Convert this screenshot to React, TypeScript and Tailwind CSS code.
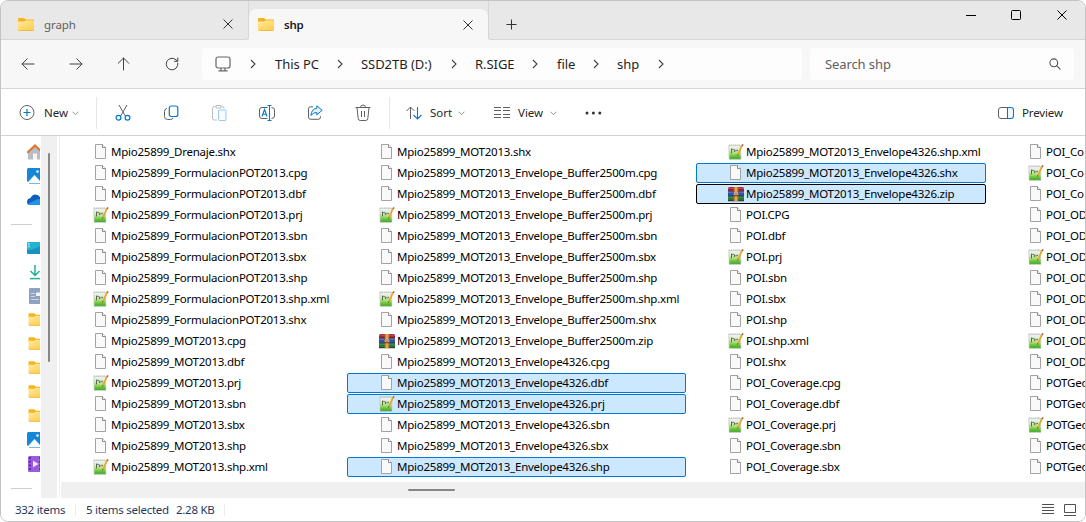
import React from "react";

type Kind = "page" | "script" | "zip";
type Sel = "" | "blue" | "black";
type FileItem = [string, Kind?, Sel?];

const col1: FileItem[] = [
  ["Mpio25899_Drenaje.shx"],
  ["Mpio25899_FormulacionPOT2013.cpg"],
  ["Mpio25899_FormulacionPOT2013.dbf"],
  ["Mpio25899_FormulacionPOT2013.prj", "script"],
  ["Mpio25899_FormulacionPOT2013.sbn"],
  ["Mpio25899_FormulacionPOT2013.sbx"],
  ["Mpio25899_FormulacionPOT2013.shp"],
  ["Mpio25899_FormulacionPOT2013.shp.xml", "script"],
  ["Mpio25899_FormulacionPOT2013.shx"],
  ["Mpio25899_MOT2013.cpg"],
  ["Mpio25899_MOT2013.dbf"],
  ["Mpio25899_MOT2013.prj", "script"],
  ["Mpio25899_MOT2013.sbn"],
  ["Mpio25899_MOT2013.sbx"],
  ["Mpio25899_MOT2013.shp"],
  ["Mpio25899_MOT2013.shp.xml", "script"],
];
const col2: FileItem[] = [
  ["Mpio25899_MOT2013.shx"],
  ["Mpio25899_MOT2013_Envelope_Buffer2500m.cpg"],
  ["Mpio25899_MOT2013_Envelope_Buffer2500m.dbf"],
  ["Mpio25899_MOT2013_Envelope_Buffer2500m.prj", "script"],
  ["Mpio25899_MOT2013_Envelope_Buffer2500m.sbn"],
  ["Mpio25899_MOT2013_Envelope_Buffer2500m.sbx"],
  ["Mpio25899_MOT2013_Envelope_Buffer2500m.shp"],
  ["Mpio25899_MOT2013_Envelope_Buffer2500m.shp.xml", "script"],
  ["Mpio25899_MOT2013_Envelope_Buffer2500m.shx"],
  ["Mpio25899_MOT2013_Envelope_Buffer2500m.zip", "zip"],
  ["Mpio25899_MOT2013_Envelope4326.cpg"],
  ["Mpio25899_MOT2013_Envelope4326.dbf", "page", "blue"],
  ["Mpio25899_MOT2013_Envelope4326.prj", "script", "blue"],
  ["Mpio25899_MOT2013_Envelope4326.sbn"],
  ["Mpio25899_MOT2013_Envelope4326.sbx"],
  ["Mpio25899_MOT2013_Envelope4326.shp", "page", "blue"],
];
const col3: FileItem[] = [
  ["Mpio25899_MOT2013_Envelope4326.shp.xml", "script"],
  ["Mpio25899_MOT2013_Envelope4326.shx", "page", "blue"],
  ["Mpio25899_MOT2013_Envelope4326.zip", "zip", "black"],
  ["POI.CPG"],
  ["POI.dbf"],
  ["POI.prj", "script"],
  ["POI.sbn"],
  ["POI.sbx"],
  ["POI.shp"],
  ["POI.shp.xml", "script"],
  ["POI.shx"],
  ["POI_Coverage.cpg"],
  ["POI_Coverage.dbf"],
  ["POI_Coverage.prj", "script"],
  ["POI_Coverage.sbn"],
  ["POI_Coverage.sbx"],
];
const col4: FileItem[] = [
  ["POI_Co"],
  ["POI_Co", "script"],
  ["POI_Co"],
  ["POI_OD"],
  ["POI_OD"],
  ["POI_OD", "script"],
  ["POI_OD"],
  ["POI_OD"],
  ["POI_OD"],
  ["POI_OD", "script"],
  ["POI_OD"],
  ["POTGeo"],
  ["POTGeo"],
  ["POTGeo", "script"],
  ["POTGeo"],
  ["POTGeo"],
];

function PageIcon() {
  return (
    <svg className="h-4 w-4 shrink-0" viewBox="0 0 16 16">
      <path d="M2.5 .5H9.5L12.5 3.5V14.5H2.5Z" fill="#f9f9f9" stroke="#a3a3a3" />
      <path d="M9.5 .5V3.5H12.5" fill="#fff" stroke="#8a8a8a" />
    </svg>
  );
}

function ScriptIcon() {
  return (
    <svg className="h-4 w-4 shrink-0" viewBox="0 0 16 16">
      <defs>
        <linearGradient id="np" x1="0" y1="0" x2="0" y2="1">
          <stop offset="0" stopColor="#f2f4f2" />
          <stop offset=".35" stopColor="#dcebd0" />
          <stop offset=".6" stopColor="#a5dc6c" />
          <stop offset=".8" stopColor="#62c136" />
          <stop offset="1" stopColor="#3fa32c" />
        </linearGradient>
      </defs>
      <path d="M.8 1.3H12.5L12.9 15.3H1.2Z" fill="url(#np)" stroke="#b3bcb3" strokeWidth=".6" />
      <path d="M.8 1H12.5" stroke="#b6bcc0" strokeWidth="1" strokeDasharray="1 1" />
      <path d="M3.5 4.6V9.4M4.2 5.4H5.8M6.4 5.6V8M8 5.8V7.4M9.4 5.8V7" stroke="#56684f" strokeWidth="1" />
      <path d="M14.3 1.2L9.9 10.4" stroke="#e8a62c" strokeWidth="1.7" />
      <path d="M15 .3L14.2 1.9" stroke="#a56a35" strokeWidth="1.6" />
      <path d="M10 10.2L9.4 11.6" stroke="#6b5a30" strokeWidth="1" />
    </svg>
  );
}

function ZipIcon() {
  return (
    <svg className="h-4 w-4 shrink-0" viewBox="0 0 16 16">
      <path d="M0 2.5L1 1H15L16 2.5V5H0Z" fill="#a3273a" />
      <path d="M0 2.2H16" stroke="#cf5060" strokeWidth=".9" />
      <path d="M0 5.5H16V10H0Z" fill="#3150a6" />
      <path d="M0 6.2H16" stroke="#6286d8" strokeWidth=".9" />
      <path d="M0 10.3H16V15H0Z" fill="#20783a" />
      <path d="M0 11H16" stroke="#4fae59" strokeWidth=".9" />
      <path d="M0 5.2H16M0 10.1H16M0 14.8H16" stroke="#2c2034" strokeWidth=".8" />
      <path d="M5.7 1H10.3V15H5.7Z" fill="#c9772c" />
      <path d="M7.3 1H8.7V15H7.3Z" fill="#f1c044" />
      <rect x="5" y="5.8" width="6" height="4.4" rx="1" fill="#6e4330" />
      <path d="M6.2 9V7.5A1.8 1.5 0 0 1 9.8 7.5V9M8 7V9.3" stroke="#f0eadf" strokeWidth=".9" fill="none" />
    </svg>
  );
}

function FileColumn({ items, width }: { items: FileItem[]; width: string }) {
  return (
    <div className={`flex shrink-0 flex-col gap-px ${width}`}>
      {items.map(([name, kind = "page", sel = ""], i) => (
        <div
          key={i}
          className={`flex h-5 items-center gap-0.5 rounded-[2px] border pl-[31px] ${
            sel === "blue"
              ? "border-[#0078d4] bg-[#cce8ff]"
              : sel === "black"
                ? "border-black bg-[#cce8ff]"
                : "border-transparent"
          }`}
        >
          {kind === "page" ? <PageIcon /> : kind === "script" ? <ScriptIcon /> : <ZipIcon />}
          <span className="text-[11.5px] leading-[18px] tracking-[-0.24px] whitespace-nowrap text-black">{name}</span>
        </div>
      ))}
    </div>
  );
}

function Folder({ className = "" }: { className?: string }) {
  return (
    <svg className={`h-4 w-4 shrink-0 ${className}`} viewBox="0 0 16 16">
      <defs>
        <linearGradient id="fo" x1="0" y1="0" x2=".7" y2="1">
          <stop offset="0" stopColor="#ffe9a6" />
          <stop offset="1" stopColor="#ffcf4d" />
        </linearGradient>
      </defs>
      <path d="M0 2.2Q0 1 1.2 1H6L8 2.6H14.8Q16 2.6 16 3.8V6H0Z" fill="#f7b41c" />
      <path d="M0 5.2Q0 4.6 1 4.6H6L8 3.5H15Q16 3.5 16 4.4V12.8Q16 13.9 14.9 13.9H1.1Q0 13.9 0 12.8Z" fill="url(#fo)" />
      <path d="M.7 13.5H15.3" stroke="#eeb035" strokeWidth=".7" />
    </svg>
  );
}

function Cross({ color = "#333" }: { color?: string }) {
  return (
    <svg className="h-[10px] w-[10px] shrink-0" viewBox="0 0 10 10">
      <path d="M.5 .5L9.5 9.5M9.5 .5L.5 9.5" stroke={color} strokeWidth="1" />
    </svg>
  );
}

function Arrow({ d }: { d: string }) {
  return (
    <svg className="h-4 w-4 shrink-0" viewBox="0 0 16 16" fill="none" stroke="#404040" strokeLinecap="round" strokeLinejoin="round">
      <path d={d} />
    </svg>
  );
}

function Crumb({ label, width, gap = "mr-[18px]" }: { label: string; width: string; gap?: string }) {
  return (
    <div className={`flex shrink-0 items-center ${width}`}>
      <svg className={`h-[10px] w-[6px] shrink-0 ${gap}`} viewBox="0 0 6 10" fill="none" stroke="#444" strokeWidth="1.1">
        <path d="M1 1L5 5L1 9" />
      </svg>
      <span className="text-[13px] leading-5 tracking-[-0.05px] whitespace-nowrap text-[#1f1f1f]">{label}</span>
    </div>
  );
}

function Down() {
  return (
    <svg className="h-[5px] w-[7px] shrink-0" viewBox="0 0 7 5" fill="none" stroke="#909090">
      <path d="M.5 .7L3.5 3.7L6.5 .7" />
    </svg>
  );
}

const label = "text-[11.5px] leading-4 whitespace-nowrap text-[#262626]";
const tool = "h-[18px] w-[18px] shrink-0";

function Toolbar() {
  return (
    <div className="flex h-[47px] shrink-0 items-center border-b border-[#d2d2d2] bg-white pt-[2px] pr-[22px] pl-[17px]">
      <svg className={tool} viewBox="0 0 18 18" fill="none" stroke="#606060">
        <circle cx="9" cy="8.5" r="7" />
        <path d="M9 5V12M5.5 8.5H12.5" stroke="#0078d4" strokeWidth="1.2" />
      </svg>
      <span className={`${label} ml-2 w-[28px]`}>New</span>
      <Down />
      <div className="ml-[17px] h-8 w-px bg-[#e6e6e6]" />
      <svg className={`${tool} ml-[17px]`} viewBox="0 0 18 18" fill="none">
        <path d="M5 1L11.3 12M13 1L6.7 12" stroke="#606060" />
        <circle cx="4.5" cy="13.7" r="2.4" stroke="#0078d4" strokeWidth="1.2" />
        <circle cx="13.5" cy="13.7" r="2.4" stroke="#0078d4" strokeWidth="1.2" />
      </svg>
      <svg className={`${tool} ml-[30px]`} viewBox="0 0 18 18" fill="none">
        <path d="M5 4.5H4.5Q2.5 5 2.5 7.5V12.5Q2.5 15.5 5.5 15.5H8.5Q10.5 15.5 11 14" stroke="#606060" />
        <rect x="7.3" y="2" width="8.5" height="10.5" rx="2" stroke="#0078d4" strokeWidth="1.2" />
      </svg>
      <svg className={`${tool} ml-[30px]`} viewBox="0 0 18 18" fill="none">
        <path d="M5.5 2.5H4.5Q2.5 2.5 2.5 4.5V14Q2.5 16 4.5 16H7M11.5 2.5H12.5Q14 2.5 14 4.5M6 1.5H11V4H6Z" stroke="#bdbdbd" />
        <rect x="8.5" y="6" width="7.5" height="10.5" rx="1" stroke="#99c9ee" fill="#f6fbff" />
      </svg>
      <svg className={`${tool} ml-[30px]`} viewBox="0 0 18 18" fill="none">
        <path d="M9.5 3.5H4Q1.5 3.5 1.5 6V12Q1.5 14.5 4 14.5H9.5M13.5 3.5Q16.5 3.5 16.5 6V12Q16.5 14.5 13.5 14.5" stroke="#606060" />
        <path d="M11.5 2V16M9.5 1.5H13.5M9.5 16.5H13.5M4 12.5L6.5 5.5L9 12.5M4.8 10.2H8.2" stroke="#0078d4" strokeWidth="1.1" />
      </svg>
      <svg className={`${tool} ml-[30px]`} viewBox="0 0 18 18" fill="none">
        <path d="M7 2.8H4.5Q2.5 2.8 2.5 4.8V13Q2.5 15.3 4.8 15.3H12.2Q14.5 15.3 14.5 13V12.3" stroke="#606060" />
        <path d="M10.8 1.8L16.2 6.3L10.8 10.8V8.5Q7.5 8.3 4.8 11.5Q5.5 4.8 10.8 4.3Z" stroke="#0078d4" strokeLinejoin="round" fill="#e5f2fc" />
      </svg>
      <svg className={`${tool} ml-[30px]`} viewBox="0 0 18 18" fill="none" stroke="#606060">
        <path d="M1.5 3.5H16.5M6.5 3.5Q6.5 1 9 1Q11.5 1 11.5 3.5M3 3.5L4.2 14.5Q4.4 16.5 6.2 16.5H11.8Q13.6 16.5 13.8 14.5L15 3.5M7.5 7V13M10.5 7V13" />
      </svg>
      <div className="ml-[17px] h-8 w-px bg-[#e6e6e6]" />
      <svg className={`${tool} ml-[15px]`} viewBox="0 0 18 18" fill="none">
        <path d="M5.5 15V3M1.5 7L5.5 3L9.5 7" stroke="#606060" />
        <path d="M12.5 3V15M8.5 11L12.5 15L16.5 11" stroke="#0078d4" strokeWidth="1.1" />
      </svg>
      <span className={`${label} ml-[7px] w-[28px]`}>Sort</span>
      <Down />
      <svg className="ml-[29px] h-[14px] w-[17px] shrink-0" viewBox="0 0 17 14" stroke="#606060">
        <path d="M0 1.5H7M0 4.5H7M0 8.5H7M0 11.5H7M9 1.5H16M9 4.5H16M9 8.5H16M9 11.5H16" />
      </svg>
      <span className={`${label} ml-[7px] w-[32px]`}>View</span>
      <Down />
      <svg className="ml-[28px] h-1 w-[17px] shrink-0" viewBox="0 0 17 4" fill="#333">
        <circle cx="2" cy="2" r="1.5" />
        <circle cx="8.4" cy="2" r="1.5" />
        <circle cx="14.8" cy="2" r="1.5" />
      </svg>
      <div className="ml-auto flex items-center gap-2">
        <svg className="h-[14px] w-4" viewBox="0 0 16 14" fill="none">
          <path d="M9.5 1.5H3Q.5 1.5 .5 4V10Q.5 12.5 3 12.5H9.5" stroke="#606060" />
          <path d="M9.5 1.5H13Q15.5 1.5 15.5 4V10Q15.5 12.5 13 12.5H9.5Z" stroke="#0078d4" fill="#f3faff" strokeWidth="1.1" />
        </svg>
        <span className={`${label} w-[41px] tracking-[-0.15px]`}>Preview</span>
      </div>
    </div>
  );
}

function SideIcon({ children }: { children: React.ReactNode }) {
  return (
    <div className="flex h-6 shrink-0 items-center pl-[26px]">
      <svg className="h-4 w-4 shrink-0" viewBox="0 0 16 16" fill="none">
        {children}
      </svg>
    </div>
  );
}

function Picture() {
  return (
    <SideIcon>
      <rect x="0" y="0" width="16" height="14" rx="1.5" fill="#1587d6" />
      <path d="M1 14L7.5 7L14 14Z" fill="#fff" />
      <circle cx="10.5" cy="3.6" r="1.3" fill="#dff3ff" />
      <path d="M2 15.5H14" stroke="#72b9ea" />
    </SideIcon>
  );
}

function Side() {
  return (
    <div className="flex w-10 shrink-0 flex-col overflow-hidden border-r border-white bg-white pt-1">
      <SideIcon>
        <path d="M1 8V15.5H6V10H10V15.5H15V8L8 2Z" fill="#b9bcc0" />
        <path d="M6 15.5V9.5H10V15.5Z" fill="#f7f7f7" />
        <path d="M.8 8.2L8 1.4L15.2 8.2" stroke="#e0752a" strokeWidth="2" strokeLinecap="round" />
      </SideIcon>
      <Picture />
      <SideIcon>
        <path d="M0 10Q0 6.5 3.5 6Q5 2.5 8.5 2.5Q12 2.5 13.5 6Q16 7 16 10Q16 13 13 13H3Q0 13 0 10Z" fill="#0f5fbd" />
        <path d="M1 11.8L10 7.2Q16 6.5 16 10.5Q16 13 13 13H3Q1.5 13 1 11.8Z" fill="#1f93e8" />
      </SideIcon>
      <div className="flex h-6 shrink-0 items-center pl-[10px]"><div className="h-px w-[21px] bg-[#cfcfcf]" /></div>
      <SideIcon>
        <rect x="0" y="2" width="16" height="12" rx="1" fill="#22b3d3" />
        <path d="M0 10Q8 10 16 4V14H1Q0 14 0 13Z" fill="#1683bd" opacity=".7" />
        <path d="M1.2 4H2.6M1.2 6.5H2.6" stroke="#d9faff" strokeWidth="1.3" />
      </SideIcon>
      <SideIcon>
        <path d="M8 1V11.5M3.5 7L8 11.5L12.5 7" stroke="#23b193" strokeWidth="1.5" />
        <path d="M3 14.6H13" stroke="#23b193" strokeWidth="1.5" />
      </SideIcon>
      <SideIcon>
        <rect x="2" y="0" width="13" height="16" rx="1" fill="#8ea3bf" />
        <path d="M4 5.5H8M4 8.5H8M4 11.5H12" stroke="#c9d5e5" />
        <rect x="9" y="4.5" width="4" height="3.5" fill="#eff4fa" />
      </SideIcon>
      {[0, 1, 2, 3, 4].map((i) => (
        <div key={i} className="flex h-6 shrink-0 items-center pl-[27px]"><Folder className="scale-[.96]" /></div>
      ))}
      <Picture />
      <SideIcon>
        <rect x="1" y="0" width="16" height="16" rx="1.5" fill="#9a5be0" />
        <path d="M3 1V15" stroke="#4b2590" strokeWidth="1.6" strokeDasharray="2 1.7" />
        <path d="M13 1V15" stroke="#4b2590" strokeWidth="1.4" strokeDasharray="2 1.7" />
        <path d="M6 4.7L11.5 8L6 11.3Z" fill="#f4ebff" />
      </SideIcon>
      <div className="flex h-6 shrink-0 items-center pl-[10px]"><div className="h-px w-[21px] bg-[#cfcfcf]" /></div>
    </div>
  );
}

export default function App() {
  return (
    <div className="h-[522px] w-[1086px] overflow-hidden bg-white font-['Noto_Sans','Open_Sans',sans-serif]">
      <div className="flex h-full w-full flex-col overflow-hidden rounded-[8px] border border-[#c3c3c3] bg-white">
        <div className="flex h-[39px] shrink-0 items-stretch bg-[#e8e8e8]">
          <div className="flex w-[248px] items-center rounded-br-[4px] border-r border-b border-[#d6d6d6] pr-[15px] pb-[1px] pl-[17px]">
            <Folder className="mt-[10px]" />
            <span className="mt-[10px] ml-[10px] text-[11.5px] leading-4 tracking-[-0.1px] text-[#606060]">graph</span>
            <div className="mt-[9px] ml-auto"><Cross /></div>
          </div>
          <div className="mt-2 flex w-[239px] items-center rounded-t-[8px] bg-[#f7f7f7] pr-[15px] pl-[9px]">
            <Folder className="mt-px" />
            <span className="mt-px ml-[10px] text-[11.5px] leading-4 font-semibold tracking-[-0.2px] text-[#1a1a1a]">shp</span>
            <div className="ml-auto"><Cross /></div>
          </div>
          <div className="flex flex-1 items-start rounded-bl-[4px] border-b border-l border-[#d6d6d6] pr-[18px] pl-[17px]">
            <svg className="mt-[18px] h-[11px] w-[11px]" viewBox="0 0 11 11" stroke="#333">
              <path d="M5.5 .5V10.5M.5 5.5H10.5" />
            </svg>
            <div className="mt-[9px] ml-auto flex items-center">
              <svg className="h-[10px] w-[10px]" viewBox="0 0 10 10" stroke="#000"><path d="M0 5.5H10" /></svg>
              <svg className="ml-[35px] h-[10px] w-[10px]" viewBox="0 0 10 10" fill="none" stroke="#000"><rect x=".5" y=".5" width="9" height="9" rx="1" /></svg>
              <div className="ml-[36px]"><Cross color="#000" /></div>
            </div>
          </div>
        </div>

        <div className="flex h-[49px] shrink-0 items-center border-b border-[#d6d6d6] bg-[#f7f7f7] pr-[10px] pl-[19px]">
          <Arrow d="M14 8H2M7.3 2.7L2 8L7.3 13.3" />
          <div className="w-8" />
          <Arrow d="M2 8H14M8.7 2.7L14 8L8.7 13.3" />
          <div className="w-8" />
          <Arrow d="M7.5 14V2M2.2 7.3L7.5 2L12.8 7.3" />
          <div className="w-8" />
          <Arrow d="M13.8 7.2A5.8 5.8 0 1 1 12 3.8L13.5 5.2M13.8 2V5.3H10.5" />
          <div className="ml-[22px] flex h-8 w-[600px] items-center rounded-[4px] bg-[#fdfdfd] pl-[13px]">
            <svg className="mr-[19px] h-4 w-4 shrink-0" viewBox="0 0 16 16" fill="none" stroke="#666" strokeWidth="1.2">
              <rect x="1" y="1" width="14" height="11" rx="2" />
              <path d="M6 12V14.5M10 12V14.5M3.5 14.8H12.5" />
            </svg>
            <Crumb label="This PC" width="w-[87px]" gap="mr-[19px]" />
            <Crumb label="SSD2TB (D:)" width="w-[114px]" />
            <Crumb label="R.SIGE" width="w-[81px]" />
            <Crumb label="file" width="w-[61px]" gap="mr-[19px]" />
            <Crumb label="shp" width="w-[65px]" />
            <Crumb label="" width="w-[10px]" />
          </div>
          <div className="ml-2 flex h-8 w-[264px] items-center rounded-[4px] bg-[#fdfdfd] pr-[13px] pl-[15px]">
            <span className="text-[13px] leading-5 tracking-[-0.1px] text-[#606060]">Search shp</span>
            <svg className="ml-auto h-3 w-3" viewBox="0 0 12 12" fill="none" stroke="#505050" strokeWidth="1.1">
              <circle cx="4.8" cy="4.8" r="3.9" />
              <path d="M7.6 7.6L11.4 11.4" />
            </svg>
          </div>
        </div>

        <Toolbar />

        <div className="flex h-[362px] shrink-0">
          <Side />
          <div className="flex w-4 shrink-0 justify-center bg-[#f0f0f0] pt-[17px]">
            <div className="h-[209px] w-0.5 rounded-full bg-[#868686]" />
          </div>
          <div className="w-[3px] shrink-0 border-r border-[#f0f0f0]" />
          <div className="ml-px flex min-w-0 flex-1 flex-col overflow-hidden">
            <div className="flex h-[346px] gap-[10px] overflow-hidden pt-[6px]">
              <FileColumn items={col1} width="w-[276px]" />
              <FileColumn items={col2} width="w-[339px]" />
              <FileColumn items={col3} width="w-[290px]" />
              <FileColumn items={col4} width="w-[100px]" />
            </div>
            <div className="flex h-4 items-center bg-[#f0f0f0] pl-[347px]">
              <div className="h-0.5 w-[47px] rounded-full bg-[#868686]" />
            </div>
          </div>
        </div>

        <div className="flex flex-1 items-center bg-white pr-[9px] pl-[14px] text-[11.5px] leading-4 tracking-[-0.27px] whitespace-nowrap text-[#1e395b]">
          <span className="w-[60px]">332 items</span>
          <div className="mr-[10px] h-3 w-px bg-[#ececec]" />
          <span className="w-[90px]">5 items selected</span>
          <span className="w-[48px]">2.28 KB</span>
          <div className="h-3 w-px bg-[#ececec]" />
          <svg className="ml-auto h-[11px] w-3" viewBox="0 0 12 11" stroke="#505050">
            <path d="M0 .5H12M0 3.5H12M0 6.5H12M0 9.5H12" />
          </svg>
          <svg className="ml-[10px] h-3 w-3" viewBox="0 0 12 12" fill="none" stroke="#505050">
            <path d="M.5 .5H11.5V8.5H.5ZM0 11.5H12" />
          </svg>
        </div>
      </div>
    </div>
  );
}
